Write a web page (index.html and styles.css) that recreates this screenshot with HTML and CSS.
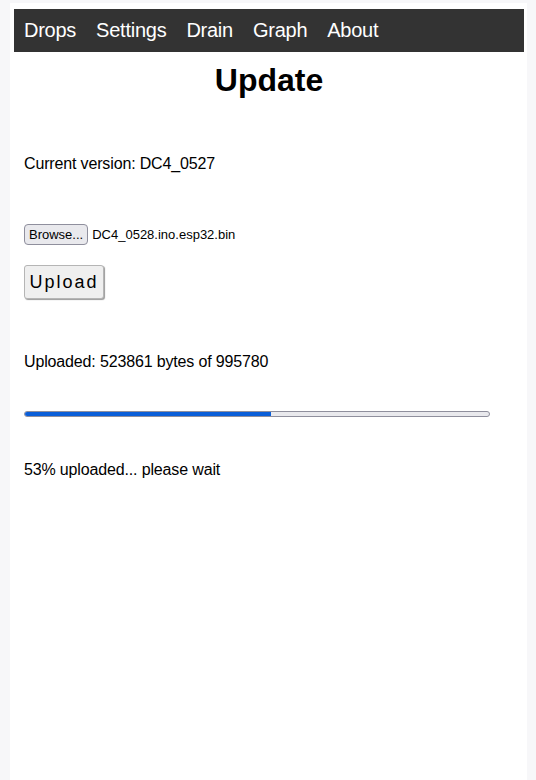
FILE: index.html
```html
<!DOCTYPE html>
<html lang="en">
<head>
    <meta charset="UTF-8">
    <meta name="viewport" content="width=device-width, initial-scale=1.0">
    <title>Update</title>
    <link rel="stylesheet" href="styles.css">
</head>
<body>
    <div class="page">
        <div class="topnav">
            <a href="#">Drops</a>
            <a href="#">Settings</a>
            <a href="#">Drain</a>
            <a href="#">Graph</a>
            <a href="#">About</a>
        </div>
        <h1 class="title">Update</h1>
        <div class="content">
            <p class="version">Current version: DC4_0527</p>
            <div class="file-row">
                <span class="browse-btn">Browse...</span>
                <span class="file-name">DC4_0528.ino.esp32.bin</span>
            </div>
            <button class="upload-btn">Upload</button>
            <p class="status">Uploaded: 523861 bytes of 995780</p>
            <div class="progress"><div class="progress-fill" style="width: 53%"></div></div>
            <p class="status-msg">53% uploaded... please wait</p>
        </div>
    </div>
</body>
</html>
```

FILE: styles.css
```css
html, body {
	height: 100%;
}
body {
	margin: 0;
	background-color: #f7f7f9;
	font-family: "Liberation Sans", Arial, sans-serif;
	color: #000;
}
.page {
	margin: 3px 9px 0 10px;
	padding: 6px 3px 0 4px;
	background-color: #fff;
	min-height: calc(100% - 3px);
	box-sizing: border-box;
}
.topnav {
	display: flex;
	background-color: #333333;
	height: 43px;
	align-items: center;
}
.topnav a {
	color: #fff;
	text-decoration: none;
	font-size: 20px;
	letter-spacing: -0.25px;
	padding: 0 10px;
}
.title {
	text-align: center;
	font-size: 32px;
	line-height: 37px;
	margin: 10px 0 0;
}
.content {
	padding: 0 10px;
}
.content p {
	font-size: 16px;
	line-height: 18px;
	letter-spacing: -0.15px;
	margin: 0;
}
.version {
	padding-top: 56px;
}
.file-row {
	display: flex;
	align-items: center;
	margin-top: 51px;
	font-size: 13px;
}
.browse-btn {
	background-color: #e9e9ed;
	border: 1px solid #8f8f9d;
	border-radius: 4px;
	height: 19px;
	line-height: 19px;
	padding: 0 4px;
	margin-right: 4px;
}
.upload-btn {
	display: block;
	margin-top: 20px;
	height: 34px;
	width: 80px;
	font-family: "Liberation Sans", Arial, sans-serif;
	font-size: 18px;
	letter-spacing: 2px;
	background-color: #efefef;
	border: 1px solid #b5b5b5;
	border-radius: 3px;
	box-shadow: 1px 1px 1px #9a9a9a;
	padding: 0;
	color: #000;
}
.status {
	margin-top: 54px !important;
}
.progress {
	margin-top: 40px;
	width: 466px;
	height: 6px;
	background-color: #e9e9ed;
	border: 1px solid #8f8f9d;
	border-radius: 3px;
	box-sizing: border-box;
	overflow: hidden;
}
.progress-fill {
	height: 100%;
	background-color: #0a5ed8;
}
.status-msg {
	margin-top: 44px !important;
}
```
